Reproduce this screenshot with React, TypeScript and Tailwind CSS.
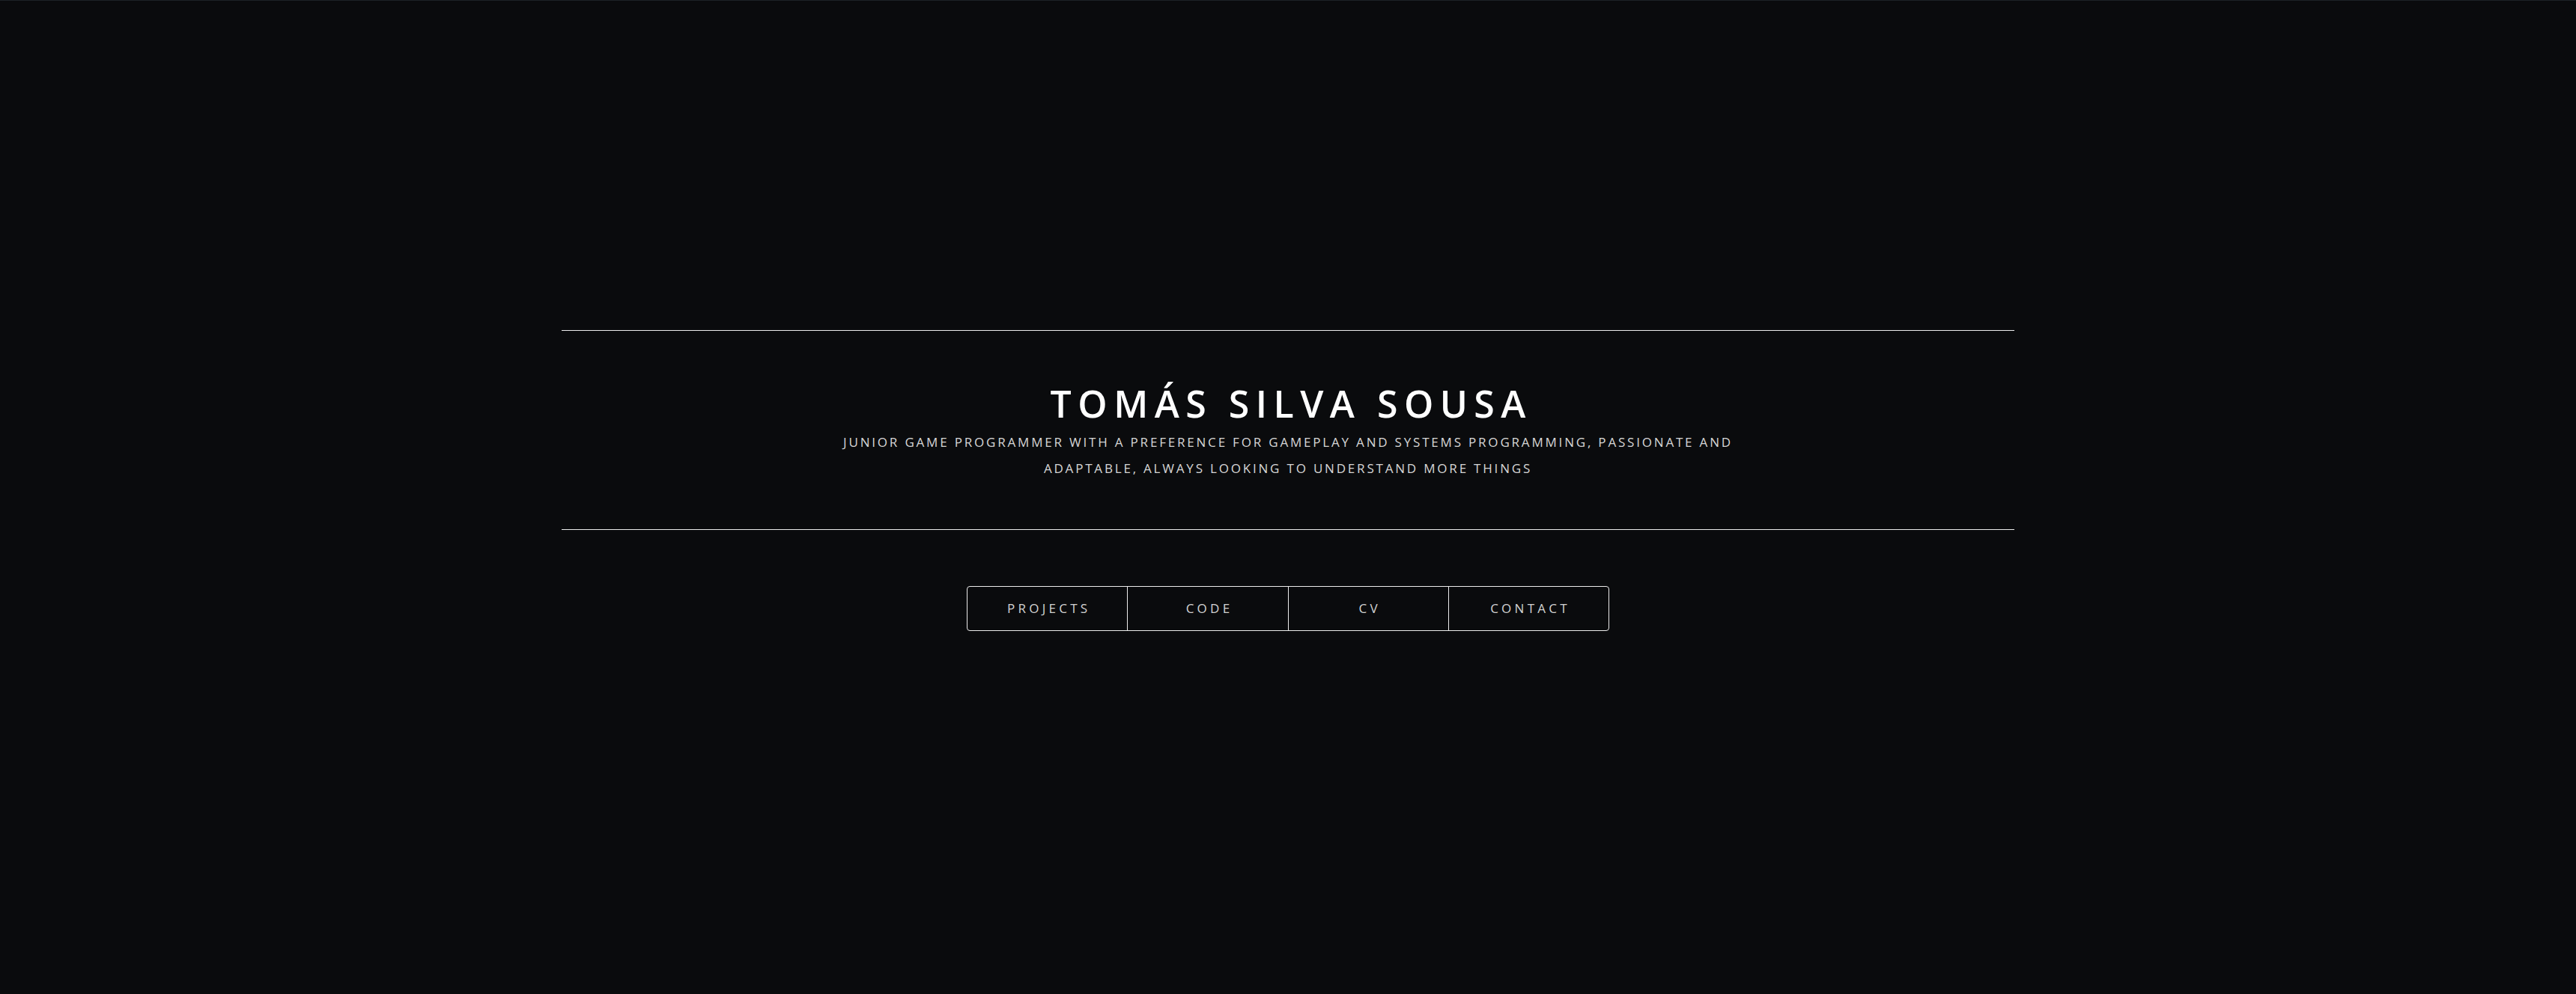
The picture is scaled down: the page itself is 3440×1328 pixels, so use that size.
import React from "react";

const links = ["PROJECTS", "CODE", "CV", "CONTACT"];

const App = () => {
  return (
    <main
      className="w-full min-h-[1328px] bg-[#0a0b0d] border-t border-[#1d2126] flex flex-col items-center pt-[440px]"
      style={{ fontFamily: '"Open Sans", "Noto Sans", sans-serif' }}
    >
      <section className="w-[1940px] h-[267px] border-y border-[#ececec] flex flex-col items-center justify-center">
        <h1 className="text-[50px] leading-[60px] font-semibold tracking-[0.17em] text-white pl-[0.17em] mt-[2px]">
          TOMÁS SILVA SOUSA
        </h1>
        <p className="w-[1230px] text-center text-[17px] leading-[35px] tracking-[0.165em] text-[#d6d6d6] mt-[4px]">
          JUNIOR GAME PROGRAMMER WITH A PREFERENCE FOR GAMEPLAY AND SYSTEMS PROGRAMMING, PASSIONATE AND ADAPTABLE, ALWAYS LOOKING TO UNDERSTAND MORE THINGS
        </p>
      </section>

      <nav className="mt-[75px] flex w-[858px] h-[60px] border border-[#ececec] rounded-[4px]">
        {links.map((label, i) => (
          <a
            key={label}
            href="#"
            className={
              "flex-1 flex items-center justify-center text-[17px] tracking-[0.25em] text-[#d2d2d2] pl-[0.25em] " +
              (i > 0 ? "border-l border-[#ececec]" : "")
            }
          >
            {label}
          </a>
        ))}
      </nav>
    </main>
  );
};

export default App;
